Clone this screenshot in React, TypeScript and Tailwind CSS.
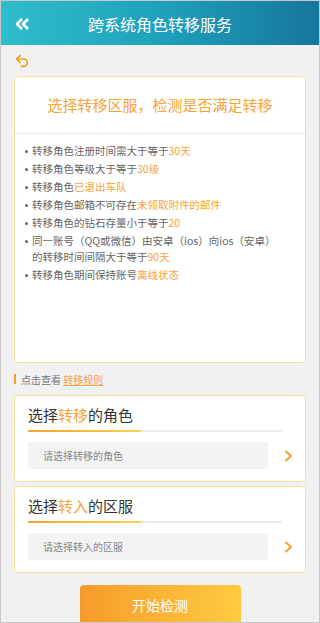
import { Undo2 } from 'lucide-react';

const rules: { text: string; hi: string }[] = [
  { text: '转移角色注册时间需大于等于', hi: '30天' },
  { text: '转移角色等级大于等于', hi: '30级' },
  { text: '转移角色', hi: '已退出车队' },
  { text: '转移角色邮箱不可存在', hi: '未领取附件的邮件' },
  { text: '转移角色的钻石存量小于等于', hi: '20' },
  { text: '同一账号（QQ或微信）由安卓（ios）向ios（安卓）的转移时间间隔大于等于', hi: '90天' },
  { text: '转移角色期间保持账号', hi: '离线状态' },
];

function SelectCard({ pre, hi, post, placeholder }: { pre: string; hi: string; post: string; placeholder: string }) {
  return (
    <div className="bg-white border border-[#fbdc9c] rounded-[4px] px-[13px] pt-[9px] pb-[12px]">
      <div className="text-[15px] leading-[20px] text-[#333]">
        {pre}
        <span className="text-[#f5a33a]">{hi}</span>
        {post}
      </div>
      <div className="relative mt-[5px] h-[2px] bg-[#ececec] mr-[10px]">
        <div className="absolute left-0 top-0 h-[2px] w-[113px] rounded-full bg-gradient-to-r from-[#f6a12e] to-[#fdd24a]" />
      </div>
      <div className="flex items-center mt-[10px]">
        <div className="w-[240px] shrink-0 h-[27px] bg-[#f3f3f3] rounded-[3px] flex items-center pl-[15px] text-[10px] text-[#888]">
          {placeholder}
        </div>
        <svg className="ml-[16px] shrink-0" width="9" height="12" viewBox="0 0 9 12" fill="none">
          <path d="M2 1.5 L7 6 L2 10.5" stroke="#f5a030" strokeWidth="2" strokeLinecap="round" strokeLinejoin="round" />
        </svg>
      </div>
    </div>
  );
}

export default function App() {
  return (
    <div
      className="w-[320px] h-[623px] overflow-hidden bg-[#f1f1f1] border border-[#c9c9c9] flex flex-col"
      style={{ fontFamily: '"Noto Sans CJK SC", "Noto Sans", sans-serif' }}
    >
      {/* header */}
      <div className="h-[44px] shrink-0 flex items-center relative bg-gradient-to-r from-[#2ebdcc] via-[#1fa1bb] to-[#17769b]">
        <svg className="absolute left-[14px] top-[17px]" width="15" height="12" viewBox="0 0 15 12" fill="none">
          <path d="M7 1 L2 6 L7 11" stroke="white" strokeWidth="2.6" strokeLinejoin="round" />
          <path d="M13 1 L8 6 L13 11" stroke="white" strokeWidth="2.6" strokeLinejoin="round" />
        </svg>
        <div className="flex-1 text-center text-white text-[16px] leading-[20px] mt-[2px]">跨系统角色转移服务</div>
      </div>

      <div className="px-[13px] flex flex-col flex-1">
        <div className="h-[31px] flex items-center">
          <Undo2 size={16} color="#f39a22" strokeWidth={2.6} className="mt-[1px]" />
        </div>

        {/* rules card */}
        <div className="bg-white border border-[#fbdc9c] rounded-[4px] h-[287px] flex flex-col">
          <div className="h-[57px] flex items-center justify-center border-b border-[#ececec] text-[15px] text-[#f5a33a] pt-[1px]">
            选择转移区服，检测是否满足转移
          </div>
          <ul className="pt-[9px] pl-[10px] pr-[24px] text-[10.5px] leading-[16px] text-[#666] flex flex-col gap-[2px]">
            {rules.map((r, i) => (
              <li key={i} className="flex">
                <span className="w-[7px] shrink-0 flex pt-[7px]">
                  <span className="w-[3px] h-[3px] rounded-full bg-[#666]" />
                </span>
                <span>
                  {r.text}
                  <span className="text-[#f5a33a]">{r.hi}</span>
                </span>
              </li>
            ))}
          </ul>
        </div>

        <div className="flex items-center h-[32px] text-[10px] text-[#777]">
          <span className="w-[2px] h-[10px] bg-[#f5a030] mr-[5px]" />
          点击查看&nbsp;
          <span className="text-[#f5a33a] underline">转移规则</span>
        </div>

        <div className="flex flex-col gap-[4px]">
          <SelectCard pre="选择" hi="转移" post="的角色" placeholder="请选择转移的角色" />
          <SelectCard pre="选择" hi="转入" post="的区服" placeholder="请选择转入的区服" />
        </div>

        <div className="flex justify-center mt-[12px]">
          <button className="w-[161px] h-[44px] rounded-t-[4px] bg-gradient-to-r from-[#f69b2b] to-[#fdcb40] text-white text-[14px] pb-[4px]">
            开始检测
          </button>
        </div>
      </div>
    </div>
  );
}
